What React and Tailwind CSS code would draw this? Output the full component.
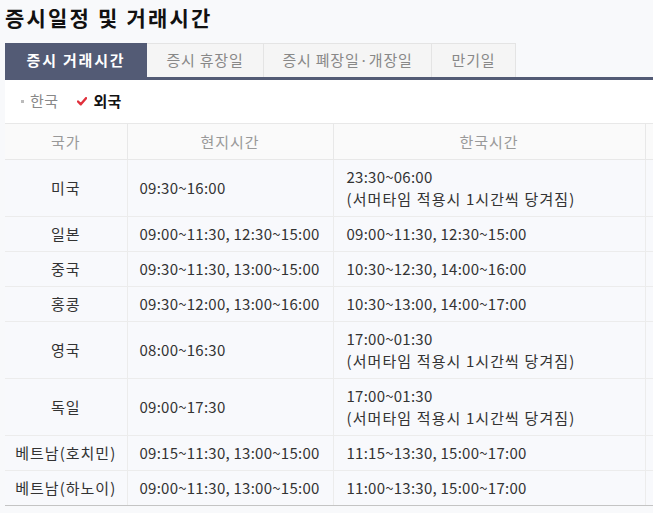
const tabs = [
  { label: '증시 거래시간', w: 'w-[142px]', active: true },
  { label: '증시 휴장일', w: 'w-[117px]' },
  { label: '증시 폐장일·개장일', w: 'w-[168px]' },
  { label: '만기일', w: 'w-[84px]' },
];

const SUMMER = '(서머타임 적용시 1시간씩 당겨짐)';

const rows = [
  { country: '미국', local: '09:30~16:00', korea: ['23:30~06:00', SUMMER] },
  { country: '일본', local: '09:00~11:30, 12:30~15:00', korea: ['09:00~11:30, 12:30~15:00'] },
  { country: '중국', local: '09:30~11:30, 13:00~15:00', korea: ['10:30~12:30, 14:00~16:00'] },
  { country: '홍콩', local: '09:30~12:00, 13:00~16:00', korea: ['10:30~13:00, 14:00~17:00'] },
  { country: '영국', local: '08:00~16:30', korea: ['17:00~01:30', SUMMER] },
  { country: '독일', local: '09:00~17:30', korea: ['17:00~01:30', SUMMER] },
  { country: '베트남(호치민)', local: '09:15~11:30, 13:00~15:00', korea: ['11:15~13:30, 15:00~17:00'] },
  { country: '베트남(하노이)', local: '09:00~11:30, 13:00~15:00', korea: ['11:00~13:30, 15:00~17:00'] },
];

const CheckIcon = () => (
  <svg width="10" height="9" viewBox="0 0 10 9" className="mr-[6px]">
    <path d="M1 4.5 L3.8 7.3 L9 1.2" fill="none" stroke="#e0303c" strokeWidth="2.4" strokeLinecap="round" strokeLinejoin="round" />
  </svg>
);

export default function App() {
  return (
    <div
      className="min-h-screen w-full overflow-hidden bg-[#f8f9fb] text-[#333]"
      style={{ fontFamily: '"Noto Sans CJK KR", "Noto Sans", sans-serif' }}
    >
      <div className="pl-[5px]">
        <h1 className="h-[43px] text-[21px] leading-[34px] font-bold tracking-[2.2px] text-[#111]">
          증시일정 및 거래시간
        </h1>

        <div className="flex h-[37px] border-b-[3px] border-[#535b75]">
          {tabs.map((t) =>
            t.active ? (
              <div
                key={t.label}
                className={`${t.w} flex items-center justify-center bg-[#535b75] text-[15px] font-bold tracking-[1.8px] text-white`}
              >
                {t.label}
              </div>
            ) : (
              <div
                key={t.label}
                className={`${t.w} flex items-center justify-center border-t border-r border-[#e4e4e4] bg-[#f5f5f5] text-[15px] tracking-[0.8px] text-[#888]`}
              >
                {t.label}
              </div>
            )
          )}
        </div>

        <div className="flex h-[43px] items-center bg-white pl-[16px] text-[15px] tracking-[0.4px]">
          <span className="mr-[6px] inline-block h-[3px] w-[3px] bg-[#bbb]" />
          <span className="mr-[19px] text-[#888]">한국</span>
          <CheckIcon />
          <span className="font-bold text-[#111]">외국</span>
        </div>

        <table className="w-[760px] table-fixed border-collapse text-[15px] leading-[22px] whitespace-nowrap">
          <colgroup>
            <col className="w-[122px]" />
            <col className="w-[206px]" />
            <col className="w-[312px]" />
            <col className="w-[120px]" />
          </colgroup>
          <thead>
            <tr className="h-[36px] bg-[#fafafa] tracking-[1px] text-[#999]">
              <th className="border-t border-r border-b border-[#e8e8e8] font-normal">국가</th>
              <th className="border-t border-r border-b border-[#e8e8e8] font-normal">현지시간</th>
              <th className="border-t border-r border-b border-[#e8e8e8] font-normal">한국시간</th>
              <th className="border-t border-b border-[#e8e8e8] font-normal"></th>
            </tr>
          </thead>
          <tbody className="bg-[#f8f9fc]">
            {rows.map((r, i) => {
              const last = i === rows.length - 1;
              const bb = last ? 'border-b border-b-[#c4c4c4]' : 'border-b border-b-[#ececec]';
              return (
                <tr key={r.country}>
                  <td className={`border-r border-r-[#ececec] ${bb} py-[6px] text-center tracking-[1px]`}>
                    {r.country}
                  </td>
                  <td className={`border-r border-r-[#ececec] ${bb} px-[12px] py-[6px] tracking-[0.25px]`}>
                    {r.local}
                  </td>
                  <td className={`border-r border-r-[#ececec] ${bb} px-[13px] py-[6px]`}>
                    {r.korea.map((line) => (
                      <div key={line} className={line === SUMMER ? 'tracking-[1.1px]' : 'tracking-[0.25px]'}>
                        {line}
                      </div>
                    ))}
                  </td>
                  <td className={`${bb} py-[6px]`}></td>
                </tr>
              );
            })}
          </tbody>
        </table>
      </div>
    </div>
  );
}
